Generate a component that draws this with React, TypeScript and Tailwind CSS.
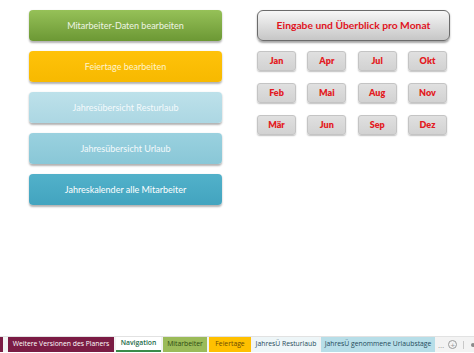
import React from "react";

const leftButtons = [
  { label: "Mitarbeiter-Daten bearbeiten", cls: "bg-gradient-to-b from-[#96c158] to-[#6c9834] text-[#eef5e4]" },
  { label: "Feiertage bearbeiten", cls: "bg-gradient-to-b from-[#ffc20a] to-[#f7b900] text-[#fff4cc]" },
  { label: "Jahresübersicht Resturlaub", cls: "bg-gradient-to-b from-[#bde1ea] to-[#acd7e3] text-[#f4fafc]" },
  { label: "Jahresübersicht Urlaub", cls: "bg-gradient-to-b from-[#9ad1df] to-[#89c7d7] text-[#f4fafc]" },
  { label: "Jahreskalender alle Mitarbeiter", cls: "bg-gradient-to-b from-[#52b1ca] to-[#42a4bf] text-white" },
];

const months = ["Jan", "Apr", "Jul", "Okt", "Feb", "Mai", "Aug", "Nov", "Mär", "Jun", "Sep", "Dez"];

export default function App() {
  return (
    <div
      className="w-[474px] h-[353px] bg-white flex flex-col overflow-hidden"
      style={{ fontFamily: "Lato, 'Open Sans', sans-serif" }}
    >
      <div className="flex-1 flex pt-[10px]">
        <div className="ml-[29px] w-[193px] flex flex-col gap-[10px]">
          {leftButtons.map((b) => (
            <div
              key={b.label}
              className={`h-[31px] rounded-[4px] flex items-center justify-center text-[9px] shadow-[0_1.5px_2px_rgba(0,0,0,0.3)] ${b.cls}`}
            >
              {b.label}
            </div>
          ))}
        </div>
        <div className="ml-[35px] w-[193px] flex flex-col">
          <div className="h-[31px] rounded-[6px] border border-[#6b6b6b] bg-gradient-to-b from-[#f7f7f7] to-[#c6c6c6] flex items-center justify-center text-[10.3px] font-bold text-[#e0141e] shadow-[0_1.5px_2px_rgba(0,0,0,0.35)]">
            Eingabe und Überblick pro Monat
          </div>
          <div className="mt-[10px] w-[190px] grid grid-cols-[39px_39px_39px_39px] justify-between gap-y-[12px]">
            {months.map((m) => (
              <div
                key={m}
                className="h-[20px] rounded-[3px] border border-[#c4c4c4] bg-gradient-to-b from-[#e0e0e0] to-[#d2d2d2] flex items-center justify-center text-[9px] font-extrabold text-[#e31b23] shadow-[0_1px_1.5px_rgba(0,0,0,0.25)]"
              >
                {m}
              </div>
            ))}
          </div>
        </div>
      </div>
      <div className="h-[16px] mb-[1px] flex items-stretch text-[6.8px] bg-[#f3f3f3] border-t border-[#e2e2e2] whitespace-nowrap" style={{ fontFamily: "'Open Sans', Lato, sans-serif" }}>
        <div className="w-[3px] shrink-0 bg-[#7b1c44]" />
        <div className="w-[5px] shrink-0" />
        <div className="w-[106px] shrink-0 bg-[#7b1c44] text-white flex items-center justify-center">Weitere Versionen des Planers</div>
        <div className="w-[2px] shrink-0" />
        <div className="w-[45px] shrink-0 bg-white text-[#1e6b4a] font-semibold flex items-center justify-center border-b-2 border-[#3a8b4a]">Navigation</div>
        <div className="w-[2px] shrink-0" />
        <div className="w-[44px] shrink-0 bg-[#9bbb59] text-[#2c4a10] flex items-center justify-center">Mitarbeiter</div>
        <div className="w-[2px] shrink-0" />
        <div className="w-[42px] shrink-0 bg-[#ffc000] text-[#6a4a00] flex items-center justify-center">Feiertage</div>
        <div className="w-[2px] shrink-0" />
        <div className="w-[66px] shrink-0 bg-[#eef6f8] text-[#1f4a5a] flex items-center justify-center">JahresÜ Resturlaub</div>
        <div className="w-[2px] shrink-0" />
        <div className="w-[114px] shrink-0 bg-[#b7dee8] text-[#1f4a5a] flex items-center justify-center">JahresÜ genommene Urlaubstage</div>
        <div className="flex items-center pl-[3px] gap-[4px] text-[#9a9a9a]">
          <span className="text-[8px] leading-none">…</span>
          <span className="w-[9px] h-[9px] rounded-full border border-[#9a9a9a] flex items-center justify-center text-[8px] leading-none">+</span>
          <span className="w-px h-[8px] bg-[#c8c8c8] ml-[2px]" />
          <span className="w-[4px] h-[4px] rounded-full bg-[#8a8a8a] ml-[3px]" />
        </div>
      </div>
    </div>
  );
}
